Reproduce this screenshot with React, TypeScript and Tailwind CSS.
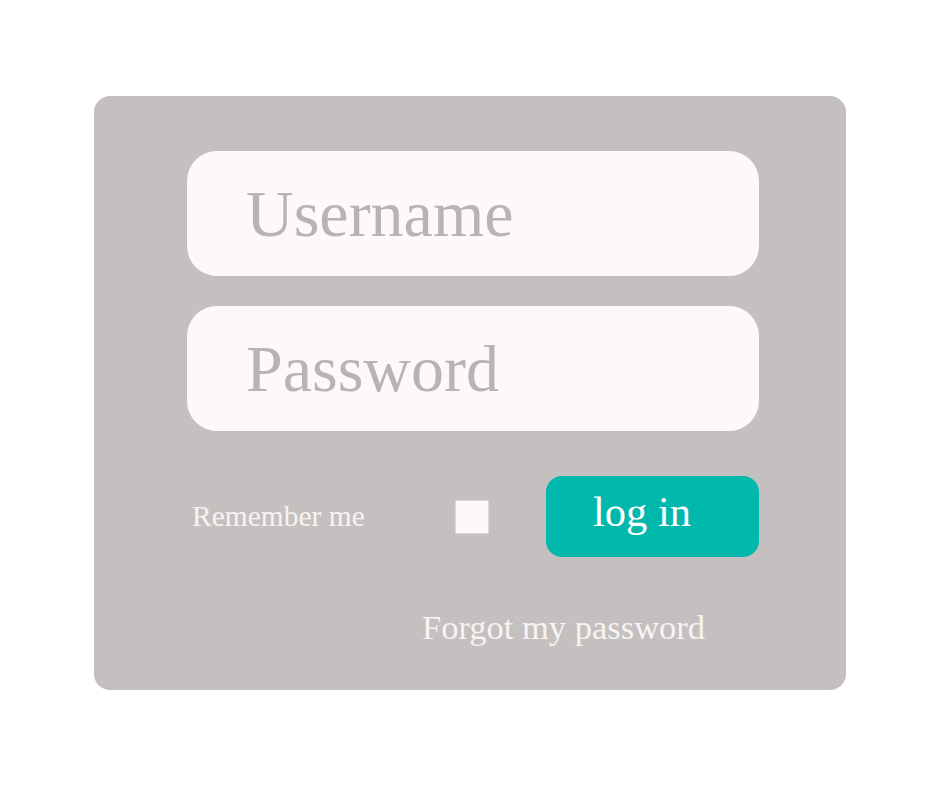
import React from "react";

export default function App() {
  const serif = { fontFamily: '"Liberation Serif", "Times New Roman", serif' };
  return (
    <div className="min-h-[788px] w-full bg-white pt-[96px]" style={serif}>
      <div className="mx-auto flex h-[594px] w-[752px] flex-col rounded-2xl bg-[#c4c0bf] pl-[93px] pt-[55px]">
        <input
          type="text"
          placeholder="Username"
          className="h-[125px] w-[572px] rounded-[30px] bg-[#fdf9f8] pl-[59px] text-[66px] leading-none text-[#8a8685] outline-none placeholder:text-[#b8b4b3]"
          style={serif}
        />
        <input
          type="password"
          placeholder="Password"
          className="mt-[30px] h-[125px] w-[572px] rounded-[30px] bg-[#fdf9f8] pl-[59px] text-[66px] leading-none text-[#8a8685] outline-none placeholder:text-[#b8b4b3]"
          style={serif}
        />
        <div className="mt-[45px] flex h-[81px] items-start">
          <span className="ml-[5px] mt-[26px] w-[263px] text-[29.5px] leading-none text-[#f7f3f2]">
            Remember me
          </span>
          <span className="mt-[24px] h-[34px] w-[34px] border border-[#dcd8d7] bg-[#fdf9f8]" />
          <div
            role="button"
            className="ml-[57px] flex h-[81px] w-[213px] cursor-pointer items-start rounded-2xl bg-[#00b8ab] pl-[47px] pt-[15px] text-[42.5px] leading-none text-white"
          >
            log in
          </div>
        </div>
        <a className="ml-[235px] mt-[53px] text-[34.5px] leading-none text-[#f7f3f2]">
          Forgot my password
        </a>
      </div>
    </div>
  );
}
